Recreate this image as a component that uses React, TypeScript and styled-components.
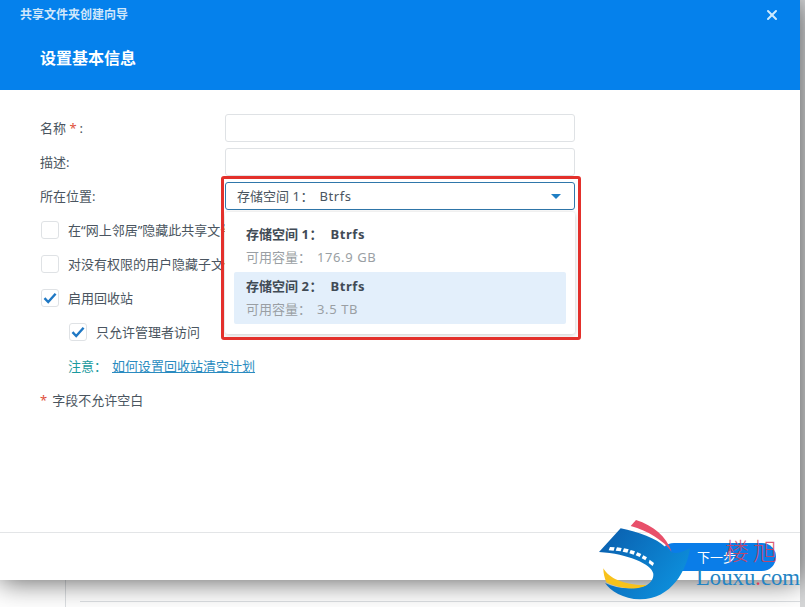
import styled, { createGlobalStyle } from "styled-components";
import { X } from "lucide-react";

const GlobalStyle = createGlobalStyle`
  html, body {
    margin: 0;
    padding: 0;
    background: #fff;
    overflow: hidden;
  }
  * { box-sizing: border-box; }
`;

const Stage = styled.div`
  position: relative;
  width: 805px;
  height: 607px;
  overflow: hidden;
  background: #fff;
  font-family: "Noto Sans", "Noto Sans CJK SC", sans-serif;
  font-size: 13px;
  color: #4a5560;
`;

// the desktop window lying behind the dialog
const BackdropLine = styled.div<{ $vertical?: boolean }>`
  position: absolute;
  background: #dcdfe2;
  ${(p) =>
    p.$vertical
      ? "left: 65px; top: 570px; width: 1px; height: 37px;"
      : "left: 80px; top: 601px; width: 725px; height: 1px;"}
`;

const BackdropStrip = styled.div`
  position: absolute;
  left: 800px;
  top: 0;
  width: 5px;
  height: 607px;
  background: #d6d7d8;
`;

const Dialog = styled.div`
  position: relative;
  display: flex;
  flex-direction: column;
  width: 800px;
  height: 580px;
  background: #fff;
  box-shadow: 0 2px 26px rgba(0, 0, 0, 0.62);
`;

const Header = styled.header`
  position: relative;
  flex: none;
  display: flex;
  flex-direction: column;
  height: 90px;
  padding: 5px 20px 0;
  background: #0581ec;
  color: #fff;
`;

const WindowTitle = styled.div`
  font-size: 12px;
  line-height: 20px;
  font-weight: 700;
  color: #cfe7fb;
`;

const StepTitle = styled.h1`
  margin: 21px 0 0 20px;
  font-size: 16px;
  line-height: 24px;
  font-weight: 700;
`;

const CloseButton = styled.button`
  position: absolute;
  right: 20px;
  top: 7px;
  display: flex;
  padding: 0;
  border: 0;
  background: none;
  color: #cfeafd;
`;

const Body = styled.main`
  position: relative;
  flex: 1;
  padding: 21px 40px 0;
`;

const Row = styled.div<{ $indent?: boolean }>`
  display: flex;
  align-items: center;
  height: 34px;
  padding-left: ${(p) => (p.$indent ? "28px" : "0")};
`;

const RowText = styled.span`
  margin-top: -2px;
  white-space: nowrap;
`;

const Label = styled.label`
  flex: none;
  width: 185px;
  margin-top: -2px;
`;

const Required = styled.span<{ $gap?: number }>`
  color: #e0503c;
  margin-right: ${(p) => p.$gap ?? 3}px;
`;

const Latin = styled.span<{ $gap?: number }>`
  margin-left: ${(p) => p.$gap ?? 0}px;
  letter-spacing: 0.6px;
`;

const TextInput = styled.input`
  width: 350px;
  height: 28px;
  border: 1px solid #dfe2e5;
  border-radius: 3px;
  background: #fff;
  outline: none;
`;

const SelectBox = styled.div`
  display: flex;
  align-items: center;
  justify-content: space-between;
  width: 350px;
  height: 28px;
  padding: 0 13px 0 11px;
  border: 1px solid #2f77ab;
  border-radius: 3px;
  background: #fff;
`;

const Caret = styled.span`
  width: 0;
  height: 0;
  border-left: 5px solid transparent;
  border-right: 5px solid transparent;
  border-top: 5px solid #1f7fc4;
`;

const CheckBox = styled.span`
  flex: none;
  display: flex;
  align-items: center;
  justify-content: center;
  width: 18px;
  height: 18px;
  margin: 0 9px 0 1px;
  border: 1px solid #dfe2e5;
  border-radius: 3px;
  background: #fff;
`;

const NoteRow = styled(Row)`
  padding-left: 28px;
  color: #1a9a9e;
`;

const HelpLink = styled.a`
  margin-left: 5px;
  color: #2a8bc0;
  text-decoration: underline;
`;

const Menu = styled.div`
  position: absolute;
  left: 225px;
  top: 122px;
  width: 350px;
  height: 122px;
  padding: 8px 9px;
  border-radius: 3px;
  background: #fff;
  box-shadow: 0 1px 5px rgba(0, 0, 0, 0.22);
`;

const MenuItem = styled.div<{ $active?: boolean }>`
  height: 52px;
  padding: 4px 12px;
  border-radius: 2px;
  background: ${(p) => (p.$active ? "#e3effb" : "#fff")};
`;

const MenuTitle = styled.div`
  font-weight: 700;
  line-height: 20px;
  color: #414b55;
`;

const MenuSub = styled.div`
  margin-top: 3px;
  line-height: 20px;
  color: #9a9fa4;
`;

const Highlight = styled.div`
  position: absolute;
  left: 221px;
  top: 86px;
  width: 360px;
  height: 164px;
  border: 3px solid #e3302b;
  border-radius: 3px;
  pointer-events: none;
`;

const Footer = styled.footer`
  flex: none;
  display: flex;
  justify-content: flex-end;
  align-items: center;
  height: 48px;
  padding: 0 24px 0 0;
  border-top: 1px solid #e3e5e7;
`;

const NextButton = styled.button`
  width: 116px;
  height: 28px;
  padding: 0 0 0 37px;
  border: 0;
  border-radius: 14px;
  background: #0a7de8;
  color: #fff;
  font: inherit;
  text-align: left;
`;

const Watermark = styled.svg`
  position: absolute;
  left: 585px;
  top: 507px;
  width: 220px;
  height: 100px;
`;

const WatermarkName = styled.div`
  position: absolute;
  left: 725px;
  top: 532px;
  font-family: "Noto Sans CJK SC", sans-serif;
  font-size: 24px;
  line-height: 36px;
  font-weight: 300;
  letter-spacing: 4px;
  color: #d8405c;
  opacity: 0.85;
  white-space: nowrap;
`;

const WatermarkSite = styled.div`
  position: absolute;
  left: 696px;
  top: 565px;
  font-family: "Liberation Serif", serif;
  font-size: 22.7px;
  line-height: 26px;
  color: #2384c4;
  white-space: nowrap;
  span { color: #d8405c; }
`;

const Tick = () => (
  <svg width="14" height="12" viewBox="0 0 14 12">
    <path d="M1.5 6.2 5.2 10 12.6 1.8" fill="none" stroke="#1f78c4" strokeWidth="2.4" />
  </svg>
);

const LogoMark = () => (
  <Watermark viewBox="0 0 660 300">
    <defs>
      <linearGradient id="swoosh" x1="0" y1="0" x2="1" y2="0.6">
        <stop offset="0" stopColor="#0a5cab" />
        <stop offset="1" stopColor="#0d8fdc" />
      </linearGradient>
    </defs>
    <path d="M137 57 L153 39 C205 55 245 90 260 134 C235 100 190 72 137 57Z" fill="#e8506a" />
    <path
      d="M42 135 L107 64 C160 75 215 95 240 119 L260 136 C280 142 298 132 315 124 C305 190 260 277 165 277 C115 277 75 250 60 228 C95 245 140 248 175 238 C195 232 206 218 205 200 C200 172 130 140 42 135Z"
      fill="url(#swoosh)"
    />
    <path d="M55 184 C72 215 122 236 185 234 C165 248 110 250 64 226 C58 212 55 198 55 184Z" fill="#f8c21c" />
    <g fill="#fff">
      <polygon points="75,120 89,121 86,131 71,130" />
      <polygon points="96,121 110,123 107,133 92,131" />
      <polygon points="117,124 131,127 127,137 113,134" />
      <polygon points="137,129 150,133 146,143 133,139" />
      <polygon points="157,136 169,141 164,150 152,145" />
      <polygon points="175,145 186,151 181,160 170,154" />
      <polygon points="194,158 207,168 203,177 191,168" />
    </g>
  </Watermark>
);

export default function App() {
  return (
    <Stage>
      <GlobalStyle />
      <BackdropLine $vertical />
      <BackdropLine />
      <BackdropStrip />
      <Dialog>
        <Header>
          <WindowTitle>共享文件夹创建向导</WindowTitle>
          <StepTitle>设置基本信息</StepTitle>
          <CloseButton aria-label="关闭">
            <X size={16} strokeWidth={3} />
          </CloseButton>
        </Header>
        <Body>
          <Row>
            <Label>
              名称 <Required>*</Required>:
            </Label>
            <TextInput />
          </Row>
          <Row>
            <Label>描述:</Label>
            <TextInput />
          </Row>
          <Row>
            <Label>所在位置:</Label>
            <SelectBox>
              <RowText>
                存储空间 <Latin>1</Latin>：<Latin $gap={6}>Btrfs</Latin>
              </RowText>
              <Caret />
            </SelectBox>
          </Row>
          <Row>
            <CheckBox />
            <RowText>在“网上邻居”隐藏此共享文件夹</RowText>
          </Row>
          <Row>
            <CheckBox />
            <RowText>对没有权限的用户隐藏子文件夹和文件</RowText>
          </Row>
          <Row>
            <CheckBox>
              <Tick />
            </CheckBox>
            <RowText>启用回收站</RowText>
          </Row>
          <Row $indent>
            <CheckBox>
              <Tick />
            </CheckBox>
            <RowText>只允许管理者访问</RowText>
          </Row>
          <NoteRow>
            <RowText>
              注意：
              <HelpLink href="#">如何设置回收站清空计划</HelpLink>
            </RowText>
          </NoteRow>
          <Row>
            <RowText>
              <Required $gap={5}>*</Required>
              字段不允许空白
            </RowText>
          </Row>
          <Menu>
            <MenuItem>
              <MenuTitle>
                存储空间 <Latin>1</Latin>：<Latin $gap={8}>Btrfs</Latin>
              </MenuTitle>
              <MenuSub>
                可用容量：<Latin $gap={6}>176.9 GB</Latin>
              </MenuSub>
            </MenuItem>
            <MenuItem $active>
              <MenuTitle>
                存储空间 <Latin>2</Latin>：<Latin $gap={8}>Btrfs</Latin>
              </MenuTitle>
              <MenuSub>
                可用容量：<Latin $gap={6}>3.5 TB</Latin>
              </MenuSub>
            </MenuItem>
          </Menu>
          <Highlight />
        </Body>
        <Footer>
          <NextButton>下一步</NextButton>
        </Footer>
      </Dialog>
      <LogoMark />
      <WatermarkName>楼旭</WatermarkName>
      <WatermarkSite>
        Louxu<span>.</span>com
      </WatermarkSite>
    </Stage>
  );
}
